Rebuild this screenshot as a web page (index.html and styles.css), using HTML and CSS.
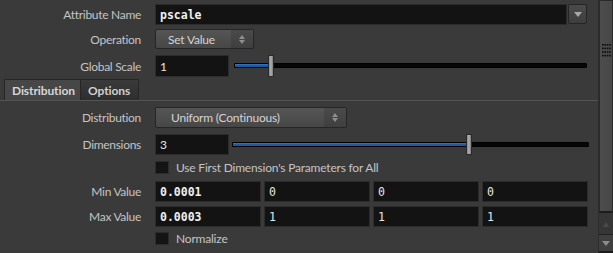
FILE: index.html
```html
<!DOCTYPE html>
<html lang="en">
<head>
  <meta charset="UTF-8">
  <title>Attribute Randomize</title>
  <link rel="stylesheet" href="styles.css">
</head>
<body>
  <div class="panel">
    <div class="row row-name">
      <label class="label">Attribute Name</label>
      <div class="field field-wide mono bold">pscale</div>
      <div class="menu-btn"><span class="tri-down"></span></div>
    </div>
    <div class="row row-op">
      <label class="label">Operation</label>
      <div class="combo combo-op">
        <span class="combo-text">Set Value</span>
        <span class="combo-arrows"><span class="tri-up"></span><span class="tri-down"></span></span>
      </div>
    </div>
    <div class="row row-scale">
      <label class="label">Global Scale</label>
      <div class="field field-num">1</div>
      <div class="slider">
        <div class="track"><div class="fill" style="width: 34px"></div></div>
        <div class="handle" style="left: 34px"></div>
      </div>
    </div>

    <div class="tabs">
      <div class="tab active">Distribution</div>
      <div class="tab">Options</div>
    </div>

    <div class="row row-dist">
      <label class="label">Distribution</label>
      <div class="combo combo-dist">
        <span class="combo-text">Uniform (Continuous)</span>
        <span class="combo-arrows"><span class="tri-up"></span><span class="tri-down"></span></span>
      </div>
    </div>
    <div class="row row-dim">
      <label class="label">Dimensions</label>
      <div class="field field-num">3</div>
      <div class="slider slider-dim">
        <div class="track"><div class="fill" style="width: 234px"></div></div>
        <div class="handle" style="left: 234px"></div>
      </div>
    </div>
    <div class="row row-check">
      <span class="label"></span>
      <span class="checkbox"></span>
      <span class="check-text">Use First Dimension's Parameters for All</span>
    </div>
    <div class="row row-vec">
      <label class="label">Min Value</label>
      <div class="vec">
        <div class="field mono bold">0.0001</div>
        <div class="field mono">0</div>
        <div class="field mono">0</div>
        <div class="field mono">0</div>
      </div>
    </div>
    <div class="row row-vec2">
      <label class="label">Max Value</label>
      <div class="vec">
        <div class="field mono bold">0.0003</div>
        <div class="field mono">1</div>
        <div class="field mono">1</div>
        <div class="field mono">1</div>
      </div>
    </div>
    <div class="row row-check2">
      <span class="label"></span>
      <span class="checkbox"></span>
      <span class="check-text">Normalize</span>
    </div>
  </div>

  <div class="scrollbar">
    <div class="thumb">
      <svg class="grip" width="9" height="13" viewBox="0 0 9 13">
        <g fill="#0c0c0c">
          <rect x="0" y="0" width="1.6" height="1.6"/><rect x="2.4" y="0" width="1.6" height="1.6"/><rect x="4.8" y="0" width="1.6" height="1.6"/><rect x="7.2" y="0" width="1.6" height="1.6"/>
          <rect x="0" y="3.6" width="1.6" height="1.6"/><rect x="2.4" y="3.6" width="1.6" height="1.6"/><rect x="4.8" y="3.6" width="1.6" height="1.6"/><rect x="7.2" y="3.6" width="1.6" height="1.6"/>
          <rect x="0" y="7.2" width="1.6" height="1.6"/><rect x="2.4" y="7.2" width="1.6" height="1.6"/><rect x="4.8" y="7.2" width="1.6" height="1.6"/><rect x="7.2" y="7.2" width="1.6" height="1.6"/>
          <rect x="0" y="10.8" width="1.6" height="1.6"/><rect x="2.4" y="10.8" width="1.6" height="1.6"/><rect x="4.8" y="10.8" width="1.6" height="1.6"/><rect x="7.2" y="10.8" width="1.6" height="1.6"/>
        </g>
      </svg>
    </div>
    <div class="arrow arrow-up"><span class="tri-up"></span></div>
    <div class="arrow arrow-down"><span class="tri-down"></span></div>
  </div>
</body>
</html>
```

FILE: styles.css
```css
body {
  margin: 0;
  width: 613px;
  height: 253px;
  overflow: hidden;
  display: flex;
  background: #3a3a3a;
  color: #c4c4c4;
  font-family: Lato, "Noto Sans", sans-serif;
  font-size: 12px;
}

.panel {
  width: 598px;
  display: flex;
  flex-direction: column;
}

.row {
  display: flex;
  align-items: center;
}

.label {
  width: 141px;
  margin-right: 14px;
  text-align: right;
  letter-spacing: -0.3px;
  flex: none;
}

.row-name { margin-top: 4px; height: 21px; }
.row-op { margin-top: 4px; height: 20px; }
.row-scale { margin-top: 6px; height: 22px; }
.row-dist { margin-top: 6px; height: 21px; }
.row-dim { margin-top: 6px; height: 21px; }
.row-check { margin-top: 2px; height: 20px; }
.row-vec { margin-top: 4px; height: 21px; }
.row-vec2 { margin-top: 4px; height: 21px; }
.row-check2 { margin-top: 1px; height: 21px; }

.field {
  box-sizing: border-box;
  height: 100%;
  background: #131313;
  border: 1px solid #2c2c2c;
  color: #e6e6e6;
  padding-left: 4px;
  display: flex;
  align-items: center;
  font-size: 12px;
}

.mono {
  font-family: "DejaVu Sans Mono", monospace;
  font-size: 11.5px;
}

.bold {
  font-weight: bold;
  color: #f0f0f0;
}

.field-wide { width: 412px; }
.field-num { width: 74px; }

.menu-btn {
  box-sizing: border-box;
  width: 19px;
  height: 20px;
  margin-left: 1px;
  align-self: flex-start;
  border: 1px solid #252525;
  border-radius: 2px;
  background: linear-gradient(#4a4a4a, #3e3e3e);
  display: flex;
  align-items: center;
  justify-content: center;
}

.tri-down, .tri-up {
  display: block;
  width: 0;
  height: 0;
  border-left: 4px solid transparent;
  border-right: 4px solid transparent;
}

.tri-down { border-top: 5px solid #a8a8a8; }
.tri-up { border-bottom: 5px solid #a8a8a8; }

.combo {
  box-sizing: border-box;
  height: 100%;
  display: flex;
  border: 1px solid #262626;
  border-radius: 2px;
  background: linear-gradient(#555555, #474747);
  color: #d4d4d4;
  letter-spacing: -0.2px;
}

.combo-op { width: 99px; }
.combo-dist { width: 192px; }

.combo-text {
  flex: 1;
  display: flex;
  align-items: center;
  justify-content: center;
  padding-right: 4px;
}

.combo-dist .combo-text {
  justify-content: flex-start;
  padding-left: 15px;
}

.combo-arrows {
  width: 22px;
  display: flex;
  flex-direction: column;
  align-items: center;
  justify-content: center;
  gap: 1px;
  background: linear-gradient(#4a4a4a, #3f3f3f);
}

.combo-arrows .tri-up, .combo-arrows .tri-down {
  border-left-width: 3px;
  border-right-width: 3px;
}

.combo-arrows .tri-up { border-bottom: 4px solid #8e8e8e; }
.combo-arrows .tri-down { border-top: 4px solid #8e8e8e; }

.slider {
  position: relative;
  width: 353px;
  height: 100%;
  margin-left: 5px;
}

.slider-dim {
  width: 357px;
  margin-left: 3px;
}

.track {
  position: absolute;
  left: 0;
  right: 0;
  top: 8px;
  height: 5px;
  box-sizing: border-box;
  background: #060606;
  border: 1px solid #000;
  border-radius: 1px;
  overflow: hidden;
}

.fill {
  height: 100%;
  background: #1e5aa3;
  border-top: 1px solid #3270b8;
  box-sizing: border-box;
}

.handle {
  position: absolute;
  top: 0;
  width: 6px;
  height: 100%;
  box-sizing: border-box;
  border: 1px solid #2a2a2a;
  background: linear-gradient(90deg, #8a8a8a, #b0b0b0 50%, #7a7a7a);
}

.tabs {
  display: flex;
  margin-top: 2px;
  padding-left: 4px;
  height: 21px;
  border-bottom: 1px solid #545454;
}

.tab {
  box-sizing: border-box;
  height: 21px;
  display: flex;
  align-items: center;
  padding: 0 7px;
  font-weight: bold;
  letter-spacing: -0.1px;
  color: #d0d0d0;
  border: 1px solid #262626;
  border-bottom: none;
  background: linear-gradient(#3a3a3a, #2e2e2e);
}

.tab.active {
  width: 77px;
  background: #474747;
  color: #d6d6d6;
}

.tab + .tab {
  width: 58px;
  border-left: none;
}

.checkbox {
  box-sizing: border-box;
  width: 14px;
  height: 13px;
  background: #141414;
  border: 1px solid #2c2c2c;
}

.check-text {
  margin-left: 7px;
  letter-spacing: -0.2px;
  color: #c4c4c4;
}

.vec {
  display: flex;
  gap: 3px;
  height: 100%;
}

.vec .field {
  width: 106px;
}

.scrollbar {
  width: 15px;
  height: 253px;
  box-sizing: border-box;
  border-left: 1px solid #2d2d2d;
  background: #363636;
  display: flex;
  flex-direction: column;
}

.thumb {
  height: 213px;
  box-sizing: border-box;
  border: 1px solid #2a2a2a;
  border-bottom: 2px solid #1c1c1c;
  background: linear-gradient(90deg, #4d4d4d, #474747);
  display: flex;
  justify-content: center;
}

.grip {
  margin-top: 43px;
}

.arrow {
  height: 16px;
  display: flex;
  align-items: center;
  justify-content: center;
}

.arrow-up {
  margin-top: 3px;
}

.arrow-up .tri-up {
  border-left-width: 3px;
  border-right-width: 3px;
  border-bottom: 5px solid #4a4a4a;
}

.arrow-down {
  margin-top: 2px;
  border-top: 1px solid #202020;
  border-bottom: 2px solid #1c1c1c;
  background: #3f3f3f;
}

.arrow-down .tri-down {
  border-top: 5px solid #8c8c8c;
}
```
